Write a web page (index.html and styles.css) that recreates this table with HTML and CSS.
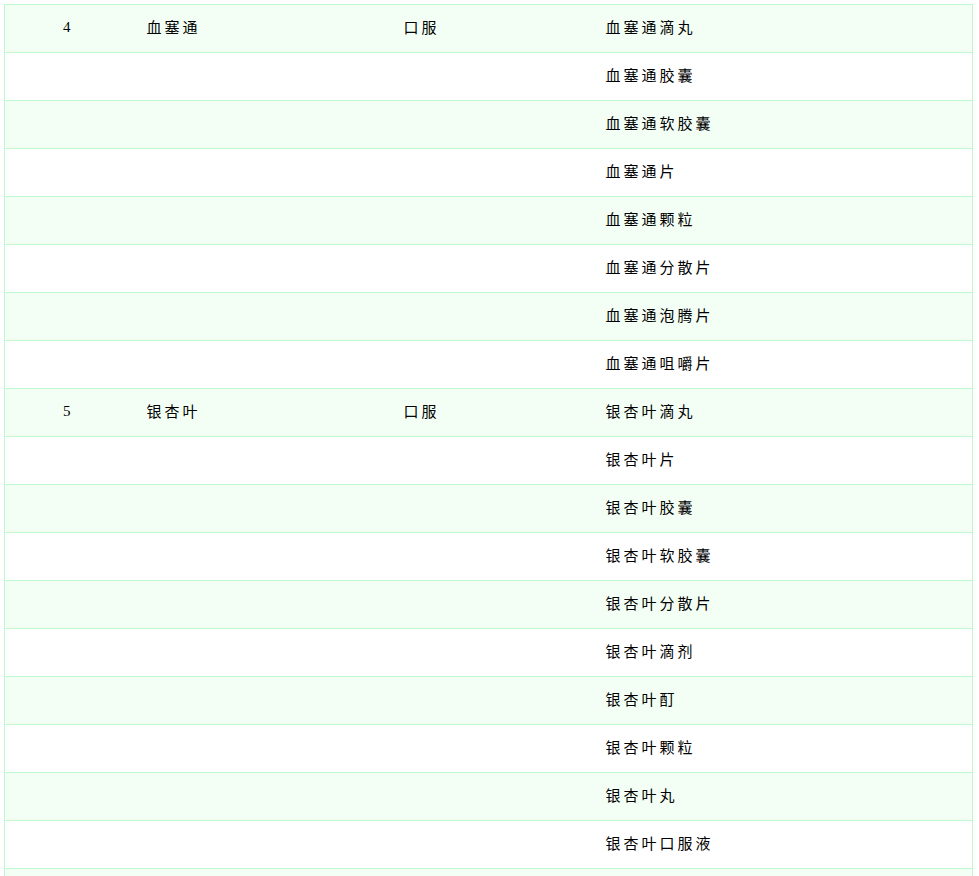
FILE: index.html
```html
<!DOCTYPE html>
<html lang="zh-CN">
<head>
<meta charset="utf-8">
<title>药品列表</title>
<link rel="stylesheet" href="styles.css">
</head>
<body>
<table class="drug-table">
  <colgroup>
    <col class="c1"><col class="c2"><col class="c3"><col class="c4">
  </colgroup>
  <tbody>
    <tr><td class="num">4</td><td>血塞通</td><td>口服</td><td>血塞通滴丸</td></tr>
    <tr><td class="num"></td><td></td><td></td><td>血塞通胶囊</td></tr>
    <tr><td class="num"></td><td></td><td></td><td>血塞通软胶囊</td></tr>
    <tr><td class="num"></td><td></td><td></td><td>血塞通片</td></tr>
    <tr><td class="num"></td><td></td><td></td><td>血塞通颗粒</td></tr>
    <tr><td class="num"></td><td></td><td></td><td>血塞通分散片</td></tr>
    <tr><td class="num"></td><td></td><td></td><td>血塞通泡腾片</td></tr>
    <tr><td class="num"></td><td></td><td></td><td>血塞通咀嚼片</td></tr>
    <tr><td class="num">5</td><td>银杏叶</td><td>口服</td><td>银杏叶滴丸</td></tr>
    <tr><td class="num"></td><td></td><td></td><td>银杏叶片</td></tr>
    <tr><td class="num"></td><td></td><td></td><td>银杏叶胶囊</td></tr>
    <tr><td class="num"></td><td></td><td></td><td>银杏叶软胶囊</td></tr>
    <tr><td class="num"></td><td></td><td></td><td>银杏叶分散片</td></tr>
    <tr><td class="num"></td><td></td><td></td><td>银杏叶滴剂</td></tr>
    <tr><td class="num"></td><td></td><td></td><td>银杏叶酊</td></tr>
    <tr><td class="num"></td><td></td><td></td><td>银杏叶颗粒</td></tr>
    <tr><td class="num"></td><td></td><td></td><td>银杏叶丸</td></tr>
    <tr><td class="num"></td><td></td><td></td><td>银杏叶口服液</td></tr>
    <tr><td class="num"></td><td></td><td></td><td></td></tr>
  </tbody>
</table>
</body>
</html>
```
FILE: styles.css
```css
html, body {
  margin: 0;
  padding: 0;
  background: #ffffff;
}
body {
  padding: 4px 0 0 4px;
  font-family: "Noto Sans CJK SC", "Liberation Serif", sans-serif;
  font-size: 15px;
  color: #000000;
}
.drug-table {
  width: 969px;
  border-collapse: collapse;
  table-layout: fixed;
  border-left: 1px solid #bff7cf;
  border-right: 1px solid #bff7cf;
}
.c1 { width: 122px; }
.c2 { width: 257px; }
.c3 { width: 202px; }
.c4 { width: auto; }
.drug-table td {
  height: 43px;
  padding: 0 0 4px 20px;
  border-top: 1px solid #bff7cf;
  vertical-align: middle;
  letter-spacing: 3px;
  line-height: 20px;
  white-space: nowrap;
}
.drug-table td.num {
  padding-left: 58px;
  font-family: "Liberation Serif", serif;
  font-size: 15px;
  letter-spacing: 0;
}
.drug-table tr:nth-child(odd) td {
  background: #f3fff5;
}
```
